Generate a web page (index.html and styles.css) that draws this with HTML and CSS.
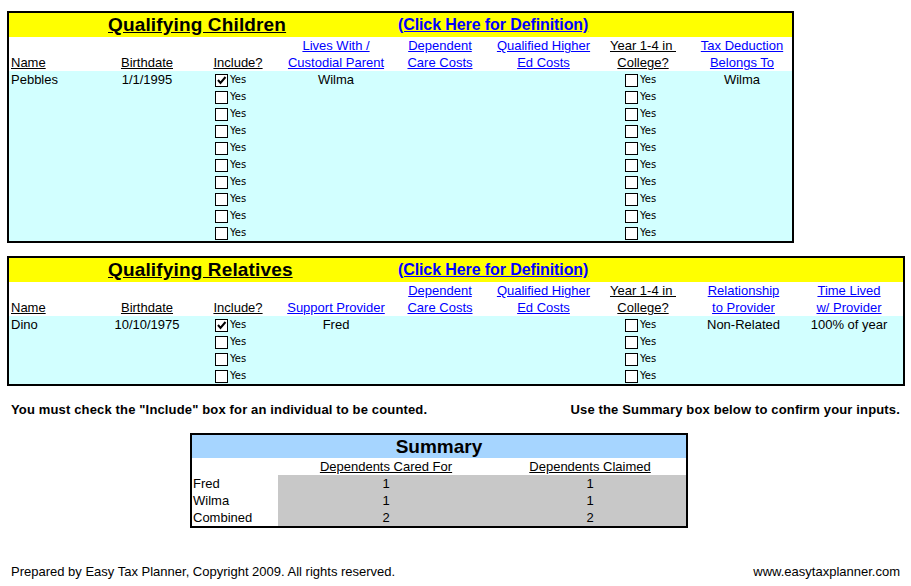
FILE: index.html
```html
<!DOCTYPE html>
<html>
<head>
<meta charset="utf-8">
<link rel="stylesheet" href="styles.css">
</head>
<body>
<div class="page">

  <section class="box box-children">
    <div class="band grid">
      <span class="band-title">Qualifying Children</span>
      <a class="band-link" href="#">(Click Here for Definition)</a>
    </div>
    <div class="head grid">
      <div class="h left"><u>Name</u></div>
      <div class="h"><u>Birthdate</u></div>
      <div class="h"><u>Include?</u></div>
      <div class="h"><a href="#">Lives With /</a><a href="#">Custodial Parent</a></div>
      <div class="h"><a href="#">Dependent</a><a href="#">Care Costs</a></div>
      <div class="h"><a href="#">Qualified Higher</a><a href="#">Ed Costs</a></div>
      <div class="h"><u>Year 1-4 in&nbsp;</u><u>College?</u></div>
      <div class="h"><a href="#">Tax Deduction</a><a href="#">Belongs To</a></div>
    </div>
    <div class="rows grid">
      <div class="c left c1">Pebbles</div>
      <div class="c c2">1/1/1995</div>
      <div class="cb-cell c3"><span class="cb"><svg width="11" height="11" viewBox="0 0 11 11"><path d="M2 5 L4.5 8 L9.5 2" fill="none" stroke="#000" stroke-width="2"/></svg></span><span class="yes">Yes</span></div>
      <div class="c c4">Wilma</div>
      <div class="cb-cell c7"><span class="cb"></span><span class="yes">Yes</span></div>
      <div class="c c8">Wilma</div>

      <div class="cb-cell c3"><span class="cb"></span><span class="yes">Yes</span></div>
      <div class="cb-cell c7"><span class="cb"></span><span class="yes">Yes</span></div>
      <div class="cb-cell c3"><span class="cb"></span><span class="yes">Yes</span></div>
      <div class="cb-cell c7"><span class="cb"></span><span class="yes">Yes</span></div>
      <div class="cb-cell c3"><span class="cb"></span><span class="yes">Yes</span></div>
      <div class="cb-cell c7"><span class="cb"></span><span class="yes">Yes</span></div>
      <div class="cb-cell c3"><span class="cb"></span><span class="yes">Yes</span></div>
      <div class="cb-cell c7"><span class="cb"></span><span class="yes">Yes</span></div>
      <div class="cb-cell c3"><span class="cb"></span><span class="yes">Yes</span></div>
      <div class="cb-cell c7"><span class="cb"></span><span class="yes">Yes</span></div>
      <div class="cb-cell c3"><span class="cb"></span><span class="yes">Yes</span></div>
      <div class="cb-cell c7"><span class="cb"></span><span class="yes">Yes</span></div>
      <div class="cb-cell c3"><span class="cb"></span><span class="yes">Yes</span></div>
      <div class="cb-cell c7"><span class="cb"></span><span class="yes">Yes</span></div>
      <div class="cb-cell c3"><span class="cb"></span><span class="yes">Yes</span></div>
      <div class="cb-cell c7"><span class="cb"></span><span class="yes">Yes</span></div>
      <div class="cb-cell c3"><span class="cb"></span><span class="yes">Yes</span></div>
      <div class="cb-cell c7"><span class="cb"></span><span class="yes">Yes</span></div>
    </div>
  </section>

  <section class="box box-relatives">
    <div class="band grid">
      <span class="band-title">Qualifying Relatives</span>
      <a class="band-link" href="#">(Click Here for Definition)</a>
    </div>
    <div class="head grid">
      <div class="h left"><u>Name</u></div>
      <div class="h"><u>Birthdate</u></div>
      <div class="h"><u>Include?</u></div>
      <div class="h"><a href="#">Support Provider</a></div>
      <div class="h"><a href="#">Dependent</a><a href="#">Care Costs</a></div>
      <div class="h"><a href="#">Qualified Higher</a><a href="#">Ed Costs</a></div>
      <div class="h"><u>Year 1-4 in&nbsp;</u><u>College?</u></div>
      <div class="h"><a href="#">Relationship</a><a href="#">to Provider</a></div>
      <div class="h"><a href="#">Time Lived</a><a href="#">w/ Provider</a></div>
    </div>
    <div class="rows grid">
      <div class="c left c1">Dino</div>
      <div class="c c2">10/10/1975</div>
      <div class="cb-cell c3"><span class="cb"><svg width="11" height="11" viewBox="0 0 11 11"><path d="M2 5 L4.5 8 L9.5 2" fill="none" stroke="#000" stroke-width="2"/></svg></span><span class="yes">Yes</span></div>
      <div class="c c4">Fred</div>
      <div class="cb-cell c7"><span class="cb"></span><span class="yes">Yes</span></div>
      <div class="c c8">Non-Related</div>
      <div class="c c9">100% of year</div>

      <div class="cb-cell c3"><span class="cb"></span><span class="yes">Yes</span></div>
      <div class="cb-cell c7"><span class="cb"></span><span class="yes">Yes</span></div>
      <div class="cb-cell c3"><span class="cb"></span><span class="yes">Yes</span></div>
      <div class="cb-cell c7"><span class="cb"></span><span class="yes">Yes</span></div>
      <div class="cb-cell c3"><span class="cb"></span><span class="yes">Yes</span></div>
      <div class="cb-cell c7"><span class="cb"></span><span class="yes">Yes</span></div>
    </div>
  </section>

  <div class="notes">
    <span>You must check the "Include" box for an individual to be counted.</span>
    <span>Use the Summary box below to confirm your inputs.</span>
  </div>

  <section class="summary">
    <div class="sum-title">Summary</div>
    <div class="sum-grid">
      <div></div>
      <div class="sh"><u>Dependents Cared For</u></div>
      <div class="sh"><u>Dependents Claimed</u></div>
      <div class="sl">Fred</div><div class="sv">1</div><div class="sv">1</div>
      <div class="sl">Wilma</div><div class="sv">1</div><div class="sv">1</div>
      <div class="sl">Combined</div><div class="sv">2</div><div class="sv">2</div>
    </div>
  </section>

  <div class="footer">
    <span>Prepared by Easy Tax Planner, Copyright 2009. All rights reserved.</span>
    <span>www.easytaxplanner.com</span>
  </div>

</div>
</body>
</html>
```

FILE: styles.css
```css
html, body {
  margin: 0;
  padding: 0;
  background: #fff;
}
body {
  font-family: "Liberation Sans", Arial, sans-serif;
  font-size: 13px;
  color: #000;
}
a {
  color: #0000ff;
  text-decoration: underline;
}
.page {
  padding: 11px 0 0 7px;
  width: 898px;
}
.box {
  border: 2px solid #000;
  box-sizing: border-box;
}
.box-children {
  width: 787px;
}
.box-relatives {
  width: 898px;
  margin-top: 13px;
}
.grid {
  display: grid;
}
.box-children .grid {
  grid-template-columns: 94px 88px 94px 102px 106px 101px 98px 100px;
}
.box-relatives .grid {
  grid-template-columns: 94px 88px 94px 102px 106px 101px 98px 103px 108px;
}
.band {
  background: #ffff00;
  height: 24px;
  line-height: 24px;
}
.band-title {
  grid-column: 2 / span 3;
  padding-left: 5px;
  font-weight: bold;
  font-size: 19px;
  letter-spacing: 0.15px;
  text-decoration: underline;
  white-space: nowrap;
}
.band-link {
  grid-column: 5 / span 3;
  padding-left: 11px;
  font-weight: bold;
  font-size: 16px;
  letter-spacing: -0.1px;
  white-space: nowrap;
}
.head {
  height: 34px;
  background: #fff;
}
.h {
  display: flex;
  flex-direction: column;
  justify-content: flex-end;
  align-items: center;
  line-height: 17px;
  white-space: nowrap;
}
.h.left {
  align-items: flex-start;
  padding-left: 2px;
}
.rows {
  background: #d2ffff;
  grid-auto-rows: 17px;
}
.c {
  line-height: 17px;
  text-align: center;
  white-space: nowrap;
}
.c.left {
  text-align: left;
  padding-left: 2px;
}
.c1 { grid-column: 1; }
.c2 { grid-column: 2; }
.c3 { grid-column: 3; }
.c4 { grid-column: 4; }
.c7 { grid-column: 7; }
.c8 { grid-column: 8; }
.c9 { grid-column: 9; }
.cb-cell {
  display: flex;
  align-items: center;
  height: 17px;
}
.cb-cell.c3 { padding-left: 24px; }
.cb-cell.c7 { padding-left: 31px; }
.cb {
  width: 11px;
  height: 11px;
  border: 1px solid #000;
  background: #fff;
  display: inline-flex;
  align-items: center;
  justify-content: center;
  margin-top: 1px;
}
.cb svg {
  display: block;
}
.yes {
  font-family: "DejaVu Sans", Tahoma, sans-serif;
  font-size: 10px;
  margin-left: 2px;
}
.notes {
  display: flex;
  justify-content: space-between;
  margin-top: 15px;
  padding: 0 5px 0 4px;
  font-weight: bold;
  letter-spacing: 0.15px;
  line-height: 17px;
}
.summary {
  margin: 15px 0 0 183px;
  width: 498px;
  border: 2px solid #000;
  box-sizing: border-box;
}
.sum-title {
  background: #a6d5ff;
  height: 23px;
  line-height: 23px;
  text-align: center;
  font-weight: bold;
  font-size: 19px;
}
.sum-grid {
  display: grid;
  grid-template-columns: 86px 216px 192px;
  grid-auto-rows: 17px;
  line-height: 17px;
}
.sh {
  text-align: center;
  white-space: nowrap;
}
.sl {
  padding-left: 1px;
}
.sv {
  background: #c8c8c8;
  text-align: center;
}
.footer {
  display: flex;
  justify-content: space-between;
  margin-top: 36px;
  padding: 0 5px 0 4px;
  line-height: 15px;
}
```
